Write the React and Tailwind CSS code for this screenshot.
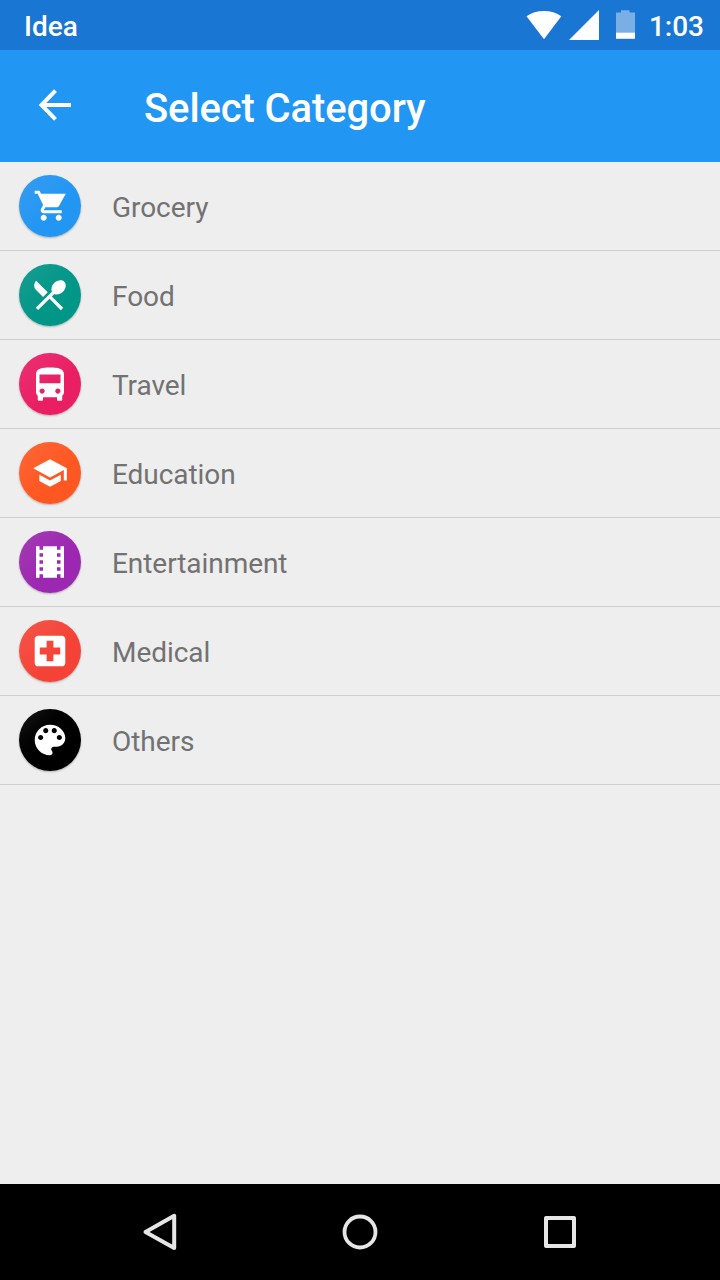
const categories = [
  {
    name: 'Grocery',
    circle: 'bg-linear-to-br from-[#359cef] to-[#2196f3] to-60%',
    transform: 'translate(14.200 12.700) scale(1.5)',
    path: 'M7 18c-1.1 0-1.99.9-1.99 2S5.9 22 7 22s2-.9 2-2-.9-2-2-2zM1 2v2h2l3.6 7.59-1.35 2.45c-.16.28-.25.61-.25.96 0 1.1.9 2 2 2h12v-2H7.42c-.14 0-.25-.11-.25-.25l.03-.12.9-1.63h7.45c.75 0 1.41-.41 1.75-1.03L21.7 4H5.21l-.94-2H1zm16 16c-1.1 0-1.99.9-1.99 2s.89 2 1.99 2 2-.9 2-2-.9-2-2-2z',
  },
  {
    name: 'Food',
    circle: 'bg-linear-to-br from-[#159d8f] to-[#009688] to-60%',
    transform: 'translate(10.700 11) scale(1.65)',
    path: 'M8.1 13.34l2.83-2.83L3.91 3.5c-1.56 1.56-1.56 4.09 0 5.66l4.19 4.18zm6.78-1.81c1.53.71 3.68.21 5.27-1.38 1.91-1.91 2.28-4.65.81-6.12-1.46-1.46-4.2-1.1-6.12.81-1.59 1.59-2.09 3.74-1.38 5.27L3.7 19.87l1.41 1.41L12 14.41l6.88 6.88 1.41-1.41L13.41 13l1.47-1.47z',
  },
  {
    name: 'Travel',
    circle: 'bg-linear-to-br from-[#ea3073] to-[#e91e63] to-60%',
    transform: 'translate(10 10.900) scale(1.75)',
    path: 'M4 16c0 .88.39 1.67 1 2.22V20.500q0 .5.5.5H7.500q.5 0 .5-.5V19h8v1.500q0 .5.5.5H18.500q.5 0 .5-.5V18.220c.61-.55 1-1.34 1-2.22V6c0-3.500-3.580-4-8-4s-8 .5-8 4v10zm3.500 1c-.83 0-1.500-.67-1.500-1.500S6.670 14 7.500 14s1.500.67 1.500 1.500S8.330 17 7.500 17zm9 0c-.83 0-1.500-.67-1.500-1.500s.67-1.500 1.500-1.500 1.500.67 1.500 1.500-.67 1.500-1.500 1.500zm1.500-6H6V6h12v5z',
  },
  {
    name: 'Education',
    circle: 'bg-linear-to-br from-[#ff6635] to-[#ff5722] to-60%',
    transform: 'translate(12.700 12.600) scale(1.53)',
    path: 'M5 13.180v4L12 21l7-3.820v-4L12 17l-7-3.820zM12 3L1 9l11 6 9-4.910V17h2V9L12 3z',
  },
  {
    name: 'Entertainment',
    circle: 'bg-linear-to-br from-[#a33ab4] to-[#9c27b0] to-60%',
    transform: 'translate(10 9.900) scale(1.75)',
    path: 'M18 3v2h-2V3H8v2H6V3H4v18h2v-2h2v2h8v-2h2v2h2V3h-2zM8 17H6v-2h2v2zm0-4H6v-2h2v2zm0-4H6V7h2v2zm10 8h-2v-2h2v2zm0-4h-2v-2h2v2zm0-4h-2V7h2v2z',
  },
  {
    name: 'Medical',
    circle: 'bg-linear-to-br from-[#f55549] to-[#f44336] to-60%',
    transform: 'translate(10.600 10.600) scale(1.7)',
    path: 'M19 3H5c-1.100 0-1.990.9-1.990 2L3 19c0 1.100.9 2 2 2h14c1.100 0 2-.9 2-2V5c0-1.100-.9-2-2-2zm-1 11h-4v4h-4v-4H6v-4h4V6h4v4h4v4z',
  },
  {
    name: 'Others',
    circle: 'bg-linear-to-br from-[#1c1c1c] to-black to-60%',
    transform: 'translate(10.600 10.600) scale(1.7)',
    path: 'M12 3c-4.970 0-9 4.030-9 9s4.030 9 9 9c.83 0 1.500-.67 1.500-1.500 0-.39-.15-.74-.39-1.010-.23-.26-.38-.61-.38-.99 0-.83.67-1.500 1.500-1.500H16c2.760 0 5-2.240 5-5 0-4.420-4.030-8-9-8zm-5.500 9c-.83 0-1.500-.67-1.500-1.500S5.670 9 6.500 9 8 9.670 8 10.500 7.330 12 6.500 12zm3-4C8.670 8 8 7.330 8 6.500S8.670 5 9.500 5s1.500.67 1.500 1.500S10.330 8 9.500 8zm5 0c-.83 0-1.500-.67-1.500-1.500S13.670 5 14.500 5s1.500.67 1.500 1.500S15.330 8 14.500 8zm3 4c-.83 0-1.500-.67-1.500-1.500S16.670 9 17.500 9s1.500.67 1.500 1.500-.67 1.500-1.500 1.500z',
  },
];

function StatusBar() {
  return (
    <div className="flex h-[50px] items-center justify-between bg-[#1976d2] pr-4 pl-6 text-[28px] font-medium text-white">
      <span className="pt-[3px]">Idea</span>
      <div className="flex items-center">
        <svg className="mr-[13px] h-[50px] w-[110px]" viewBox="526 0 110 50" fill="#fff">
          <path d="M526.500 16.200Q534 11 544 11T561.300 16.200L544 39.300z" />
          <path d="M599 10v30h-30z" />
          <path d="M621 10.300h8.500v2.200h5.500V32.500h-19V12.500h5z" fillOpacity=".42" />
          <path d="M616 32.500h19v6.300h-19z" />
        </svg>
        <span className="pt-[3px]">1:03</span>
      </div>
    </div>
  );
}

function AppBar() {
  return (
    <header className="flex h-28 items-center bg-[#2196f3] pl-[38px] text-white">
      <svg className="mb-[2px] h-8 w-[34px]" viewBox="0 0 34 32" fill="none" stroke="#fff" strokeWidth="4">
        <path d="M33 16H4M17.500 1.700 3.500 16l14 14.300" />
      </svg>
      <h1 className="pt-1.5 pl-[72px] text-[40px] leading-none font-medium tracking-[-0.12px]">Select Category</h1>
    </header>
  );
}

function CategoryRow({ item }) {
  return (
    <li className="flex h-[89px] items-center border-b border-[#cecece] pl-[19px]">
      <div className={`size-[62px] rounded-full shadow-[0_1px_2px_rgba(0,0,0,0.26)] ${item.circle}`}>
        <svg className="size-[62px]" viewBox="0 0 62 62" fill="#fff">
          <path transform={item.transform} fillRule="evenodd" d={item.path} />
        </svg>
      </div>
      <span className="pt-[3px] pl-[31px] text-[28px] leading-none tracking-[-0.06px] text-[#727272]">{item.name}</span>
    </li>
  );
}

function NavigationBar() {
  return (
    <nav className="flex h-24 items-center justify-center gap-[152px] bg-black">
      <svg className="size-12" viewBox="0 0 48 48" fill="none" stroke="#e6e6e6" strokeWidth="4" strokeLinejoin="round">
        <path d="M38.200 7.800v32.200L9.500 23.900z" />
      </svg>
      <svg className="size-12" viewBox="0 0 48 48" fill="none" stroke="#e6e6e6" strokeWidth="3.800">
        <circle cx="24" cy="24" r="15.500" />
      </svg>
      <svg className="size-12" viewBox="0 0 48 48" fill="none" stroke="#e6e6e6" strokeWidth="4" strokeLinejoin="round">
        <path d="M10 10h28v28H10z" />
      </svg>
    </nav>
  );
}

export default function App() {
  return (
    <div className="flex h-[1280px] w-[720px] flex-col bg-[#eeeeee] font-[Roboto,sans-serif]">
      <StatusBar />
      <AppBar />
      <ul className="flex-1">
        {categories.map((item) => (
          <CategoryRow key={item.name} item={item} />
        ))}
      </ul>
      <NavigationBar />
    </div>
  );
}
